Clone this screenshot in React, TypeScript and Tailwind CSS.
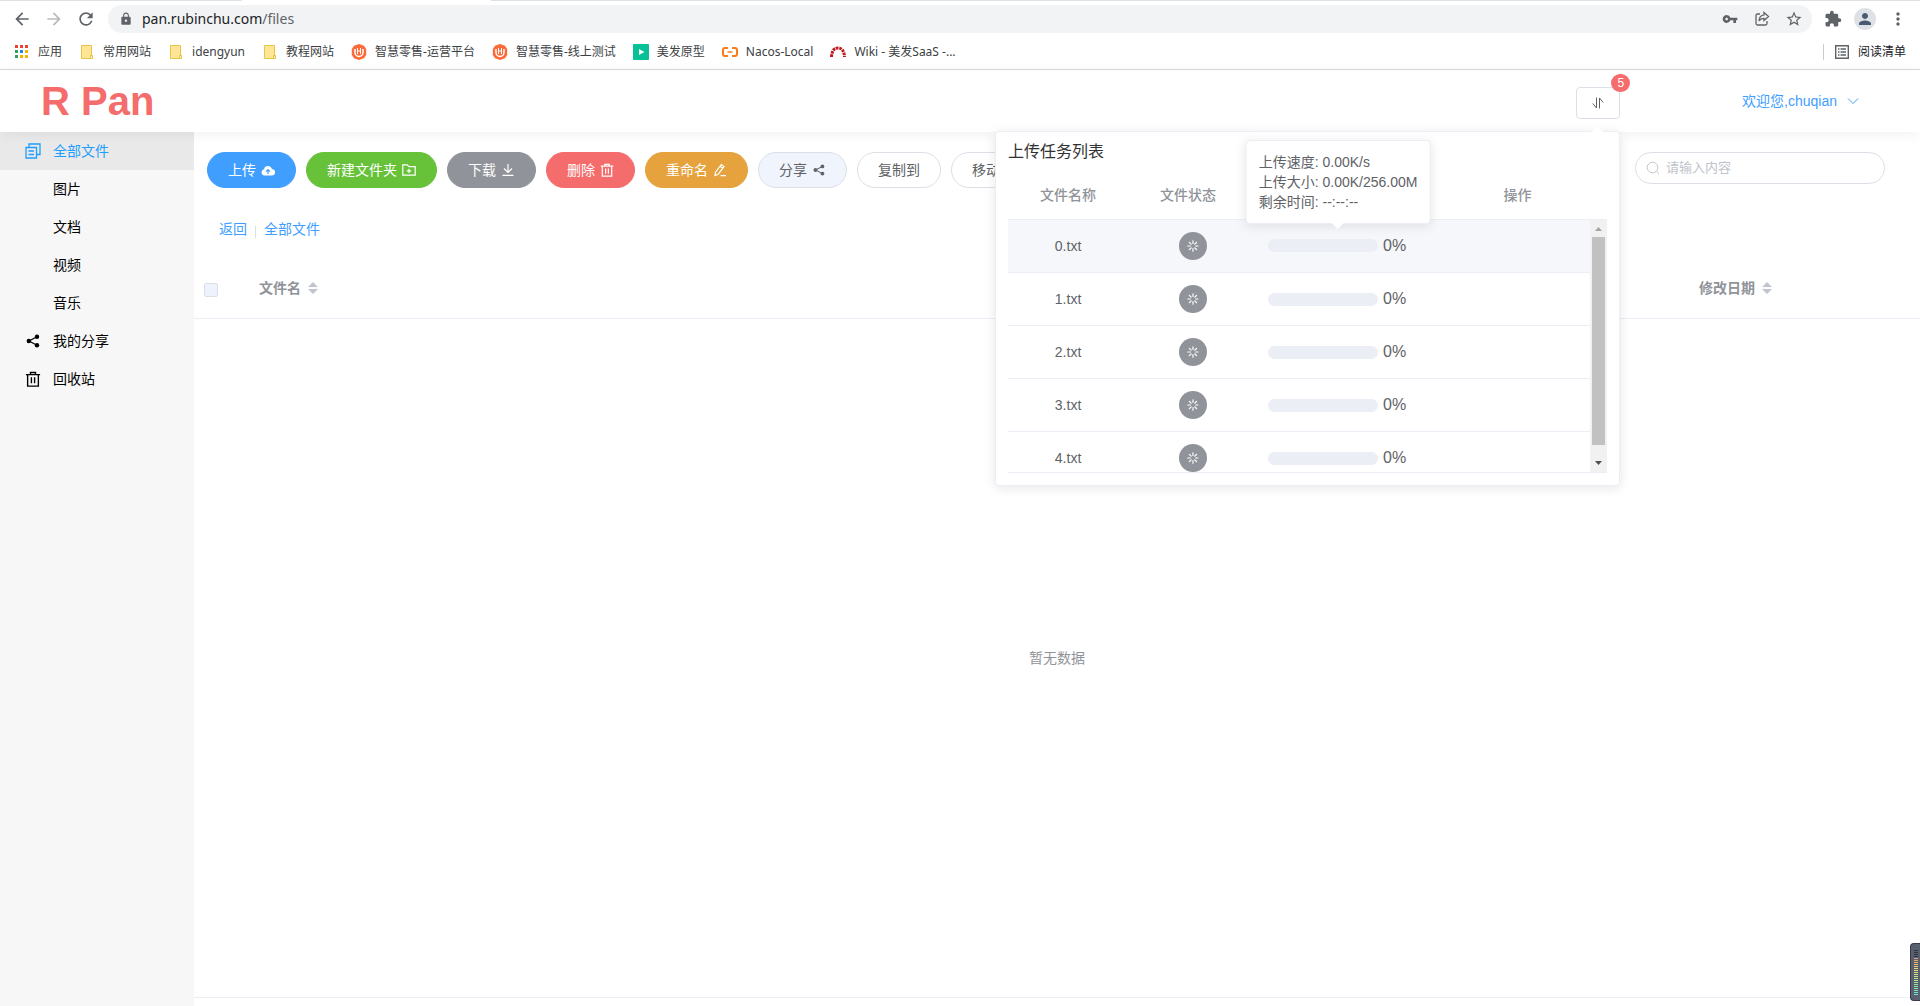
import { ReactNode, useState } from "react";
import {
  MdArrowBack,
  MdArrowForward,
  MdExtension,
  MdLock,
  MdMoreVert,
  MdPerson,
  MdRefresh,
  MdStarBorder,
  MdVpnKey,
} from "react-icons/md";

interface ITask {
  name: string;
  percent: number;
}

interface IMenu {
  label: string;
  icon?: ReactNode;
}

interface IBookmark {
  label: string;
  icon: ReactNode;
}

interface IAction {
  label: string;
  icon?: ReactNode;
  style: string;
}

const tasks: ITask[] = [
  { name: "0.txt", percent: 0 },
  { name: "1.txt", percent: 0 },
  { name: "2.txt", percent: 0 },
  { name: "3.txt", percent: 0 },
  { name: "4.txt", percent: 0 },
];

const AppsIcon = () => (
  <svg className="size-4" viewBox="0 0 16 16">
    <path fill="#ea4335" d="M1 1h3v3H1zM6 1h3v3H6zM11 1h3v3h-3z" />
    <path fill="#34a05a" d="M1 6h3v3H1z" />
    <path fill="#1a87f0" d="M6 6h3v3H6z" />
    <path fill="#f4b400" d="M11 6h3v3h-3zM6 11h3v3H6zM11 11h3v3h-3z" />
    <path fill="#34a05a" d="M1 11h3v3H1z" />
  </svg>
);

const BookmarkFolder = () => (
  <svg className="size-4" viewBox="0 0 16 16">
    <path fill="#ffe694" stroke="#e8c54a" d="M2.5 1.5h10v10h1v3h-11z" />
    <path fill="#fff3c4" stroke="#e8c54a" d="M11.5 11.5h2v3h-2z" />
  </svg>
);

const RetailIcon = () => (
  <svg className="size-4" viewBox="0 0 16 16" fill="none">
    <path fill="#fb6a38" d="M8 0l5 1.8L15.200 5v6L13 14.200 8 16l-5-1.800L.8 11V5L3 1.800z" />
    <path stroke="#fff" strokeWidth="1.500" d="M4 5v3.500a4 4 0 0 0 8 0V5" />
    <path stroke="#fff" d="M6.500 4v6M9.500 4v6M6.500 7h3" />
  </svg>
);

const PrototypeIcon = () => (
  <svg className="size-4" viewBox="0 0 16 16">
    <rect width="16" height="16" rx="1" fill="#06c196" />
    <path fill="#fff" d="M6 5l5.500 3L6 11z" />
  </svg>
);

const NacosIcon = () => (
  <svg className="size-4" viewBox="0 0 16 16" fill="none" stroke="#ff7a14">
    <path
      strokeWidth="2"
      d="M6 4H3Q1 4 1 6v4q0 2 2 2h3M10 4h3q2 0 2 2v4q0 2-2 2h-3"
    />
    <path strokeWidth="1.500" d="M5.500 8h5" />
  </svg>
);

const WikiIcon = () => (
  <svg className="size-4" viewBox="0 0 16 16" fill="none">
    <path
      stroke="#c0161c"
      strokeWidth="3"
      strokeDasharray="2.600 0.800"
      d="M1.500 13Q2 4 8 4t6.500 9"
    />
  </svg>
);

const bookmarks: IBookmark[] = [
  { label: "应用", icon: <AppsIcon /> },
  { label: "常用网站", icon: <BookmarkFolder /> },
  { label: "idengyun", icon: <BookmarkFolder /> },
  { label: "教程网站", icon: <BookmarkFolder /> },
  { label: "智慧零售-运营平台", icon: <RetailIcon /> },
  { label: "智慧零售-线上测试", icon: <RetailIcon /> },
  { label: "美发原型", icon: <PrototypeIcon /> },
  { label: "Nacos-Local", icon: <NacosIcon /> },
  { label: "Wiki - 美发SaaS -...", icon: <WikiIcon /> },
];

const ShareIcon = ({ className }: { className: string }) => (
  <svg className={className} viewBox="0 0 14 14" fill="currentColor">
    <path fill="none" stroke="currentColor" strokeWidth="1.200" d="M11 2.800L3 7l8 4.200" />
    <circle cx="11" cy="2.800" r="2.200" />
    <circle cx="2.800" cy="7" r="2.200" />
    <circle cx="11" cy="11.200" r="2.200" />
  </svg>
);

const TrashIcon = ({ className }: { className: string }) => (
  <svg className={className} viewBox="0 0 14 14" fill="none" stroke="currentColor">
    <path
      strokeWidth="1.200"
      d="M.800 3.200h12.400M4.800 3V1.300h4.400V3M2.300 3.500v9.700h9.400V3.500M5.600 5.500v5.300M8.400 5.500v5.300"
    />
  </svg>
);

const CopyIcon = () => (
  <svg className="size-4" viewBox="0 0 16 16" fill="none" stroke="currentColor">
    <path strokeWidth="1.300" d="M1 4.500h10.500V15H1zM4 4V1h11v10.500h-3M3.500 8h5.500M3.500 11.500h5.500" />
  </svg>
);

const CloudIcon = () => (
  <svg className="size-3.5" viewBox="0 0 14 14">
    <path
      fill="#fff"
      d="M3.500 12.500A3.200 3.200 0 0 1 3 6.200a4.200 4.200 0 0 1 8-.300 3.300 3.300 0 0 1-.5 6.600z"
    />
    <path fill="none" stroke="#409eff" strokeWidth="1.200" d="M7 11V7M5 8.600l2-2 2 2" />
  </svg>
);

const FolderAddIcon = () => (
  <svg className="size-3.5" viewBox="0 0 14 14" fill="none" stroke="currentColor">
    <path strokeWidth="1.200" d="M.800 1.800h4.400L7 3.600h6.200v8.600H.800zM7 5.700v4.400M4.800 7.900h4.400" />
  </svg>
);

const DownloadIcon = () => (
  <svg className="size-3.5" viewBox="0 0 14 14" fill="none" stroke="currentColor">
    <path strokeWidth="1.200" d="M7 1v8.500M3 5.500l4 4 4-4M1.500 12.400h11" />
  </svg>
);

const EditIcon = () => (
  <svg className="size-3.5" viewBox="0 0 14 14" fill="none" stroke="currentColor">
    <path
      strokeWidth="1.200"
      d="M2 12.500l.500-3.300L8.300 1.500l2.700 2-5.800 7.700zM7 3.200l2.700 2M7.500 12.700H13"
    />
  </svg>
);

const LoadingIcon = () => (
  <svg className="size-3" viewBox="0 0 12 12" fill="none" stroke="#fff" strokeLinecap="round">
    <path
      strokeWidth="1.200"
      d="M6 .800v2.600M6 8.600v2.600M.800 6h2.600M8.600 6h2.400M2.300 2.300l1.900 1.900M7.800 7.800l1.700 1.700M2.300 9.700l1.900-1.900M7.800 4.200l1.700-1.700"
    />
  </svg>
);

const SortIcon = () => (
  <svg className="ml-[7px] inline-block h-3 w-2.5 align-[-1px]" viewBox="0 0 10 12" fill="#c0c4cc">
    <path d="M0 5l5-5 5 5zM0 7l5 5 5-5z" />
  </svg>
);

const menus: IMenu[] = [
  { label: "全部文件", icon: <CopyIcon /> },
  { label: "图片" },
  { label: "文档" },
  { label: "视频" },
  { label: "音乐" },
  { label: "我的分享", icon: <ShareIcon className="size-3.5" /> },
  { label: "回收站", icon: <TrashIcon className="size-4" /> },
];

const actions: IAction[] = [
  { label: "上传", icon: <CloudIcon />, style: "border-[#409eff] bg-[#409eff] text-white" },
  { label: "新建文件夹", icon: <FolderAddIcon />, style: "border-[#67c23a] bg-[#67c23a] text-white" },
  { label: "下载", icon: <DownloadIcon />, style: "border-[#909399] bg-[#909399] text-white" },
  { label: "删除", icon: <TrashIcon className="size-3.5" />, style: "border-[#f56c6c] bg-[#f56c6c] text-white" },
  { label: "重命名", icon: <EditIcon />, style: "border-[#e6a23c] bg-[#e6a23c] text-white" },
  { label: "分享", icon: <ShareIcon className="size-3" />, style: "border-[#dcdfe6] bg-[#f0f4fc] text-[#606266]" },
  { label: "复制到", style: "border-[#dcdfe6] bg-white text-[#606266]" },
  { label: "移动到", style: "border-[#dcdfe6] bg-white text-[#606266]" },
];

const meterColors = [
  "bg-[#2f3542]",
  "bg-[#2f3542]",
  "bg-[#2f3542]",
  "bg-[#2f3542]",
  "bg-[#f0a070]",
  "bg-[#f0a868]",
  "bg-[#f0b468]",
  "bg-[#f0c068]",
  "bg-[#f0cc68]",
  "bg-[#f0d470]",
  "bg-[#e8dc70]",
  "bg-[#e0e078]",
  "bg-[#d4e480]",
  "bg-[#c8e484]",
  "bg-[#bce488]",
  "bg-[#b0e490]",
  "bg-[#a4e498]",
  "bg-[#9ce4a0]",
  "bg-[#90e4a8]",
  "bg-[#88e4b0]",
  "bg-[#80e0bc]",
  "bg-[#78e0c4]",
  "bg-[#70e0d0]",
];

const BrowserBar = () => (
  <div className="border-b border-[#d9d9d9] bg-white font-['Noto_Sans','Noto_Sans_CJK_SC',sans-serif] text-[#3c4043]">
    <div className="flex h-px">
      <div className="w-[242px] bg-[#dee1e6]" />
      <div className="w-[249px]" />
      <div className="flex-1 bg-[#dee1e6]" />
    </div>
    <div className="flex items-center pt-1 pr-3 pl-3 text-[#5f6368]">
      <button aria-label="后退" className="mr-3">
        <MdArrowBack className="size-5" />
      </button>
      <button aria-label="前进" className="mr-3 text-[#b8babd]">
        <MdArrowForward className="size-5" />
      </button>
      <button aria-label="刷新" className="mr-3">
        <MdRefresh className="size-5" />
      </button>
      <div className="flex h-7 flex-1 items-center rounded-full bg-[#f1f3f4] pr-2 pl-[11px]">
        <MdLock className="size-3.5" />
        <div className="ml-[9px] flex-1 text-sm">
          <span className="text-[#202124]">pan.rubinchu.com</span>/files
        </div>
        <div className="flex items-center gap-3">
          <button aria-label="密码" className="flex size-5 items-center justify-center">
            <MdVpnKey className="size-4" />
          </button>
          <button aria-label="分享此页" className="flex size-5 items-center justify-center">
            <svg className="size-4" viewBox="0 0 16 16" fill="none" stroke="currentColor">
              <path strokeWidth="1.300" d="M6 3H3.500Q2 3 2 4.500v8Q2 14 3.500 14h8q1.500 0 1.500-1.500V10" />
              <path strokeWidth="1.300" d="M10 1.500L14.500 5.500 10 9.500V7.300Q6.500 7.300 5 10 5.300 4.300 10 3.800z" />
            </svg>
          </button>
          <button aria-label="收藏" className="flex size-5 items-center justify-center">
            <MdStarBorder className="size-[18px]" />
          </button>
        </div>
      </div>
      <div className="ml-3 flex items-center gap-3">
        <button aria-label="扩展程序">
          <MdExtension className="size-[18px]" />
        </button>
        <button
          aria-label="用户"
          className="flex size-[22px] items-center justify-center rounded-full bg-[#dee1e6] text-[#4a5a72]"
        >
          <MdPerson className="size-[18px]" />
        </button>
        <button aria-label="更多">
          <MdMoreVert className="size-5" />
        </button>
      </div>
    </div>
    <div className="flex h-9 items-center gap-[17px] pt-px pr-3.5 pl-3.5 text-xs">
      {bookmarks.map((item) => (
        <a key={item.label} href="#" className="flex items-center gap-2 whitespace-nowrap">
          {item.icon}
          {item.label}
        </a>
      ))}
      <div className="ml-auto flex items-center text-[#202124]">
        <div className="mr-2.5 h-4 w-px bg-[#c8cacd]" />
        <svg className="mr-2 size-4 text-[#5f6368]" viewBox="0 0 16 16" fill="none" stroke="currentColor">
          <path strokeWidth="1.400" d="M1.700 1.700h12.600v12.600H1.700z" />
          <path strokeWidth="1.300" d="M4 5h1.500M6.500 5H12M4 8h1.500M6.500 8H12M4 11h1.500M6.500 11H12" />
        </svg>
        <button>阅读清单</button>
      </div>
    </div>
  </div>
);

const SpeedTip = () => (
  <div className="absolute bottom-9 left-1/2 z-20 -translate-x-1/2 rounded-sm border border-[#ebeef5] bg-white px-3 py-[11px] text-left text-sm leading-5 whitespace-nowrap shadow-[0_2px_12px_rgba(0,0,0,0.1)]">
    <p>上传速度: 0.00K/s</p>
    <p>上传大小: 0.00K/256.00M</p>
    <p>剩余时间: --:--:--</p>
    <div className="absolute top-full left-1/2 size-0 -translate-x-1/2 border-x-[6px] border-t-[6px] border-x-transparent border-t-white" />
  </div>
);

const TaskPopover = () => (
  <div className="absolute top-11 right-0 z-20 w-[625px] rounded-sm border border-[#ebeef5] bg-white p-3 text-[#606266] shadow-[0_2px_12px_rgba(0,0,0,0.1)]">
    <div className="absolute right-4 bottom-full size-0 border-x-[6px] border-b-[6px] border-x-transparent border-b-white" />
    <h2 className="mb-3 text-base leading-4 text-[#303133]">上传任务列表</h2>
    <table className="w-full table-fixed text-sm text-[#909399]">
      <thead>
        <tr className="h-[47px] border-b border-[#ebeef5]">
          <th className="w-[120px] font-medium">文件名称</th>
          <th className="w-[120px] font-medium">文件状态</th>
          <th className="w-[180px]" />
          <th className="font-medium">操作</th>
        </tr>
      </thead>
    </table>
    <div className="relative">
      {/* the tip hangs over the first row, so it lives outside the clipped body */}
      <div className="absolute top-10 left-[240px] w-[180px]">
        <SpeedTip />
      </div>
      <div className="flex h-[253px] overflow-hidden border-b border-[#ebeef5]">
        <div className="flex-1">
          <table className="w-full table-fixed text-center text-sm">
            <tbody>
              {tasks.map((task, index) => (
                <tr
                  key={task.name}
                  className={
                    index === 0
                      ? "h-[53px] border-b border-[#ebeef5] bg-[#f5f7fa]"
                      : "h-[53px] border-b border-[#ebeef5]"
                  }
                >
                  <td className="w-[120px]">{task.name}</td>
                  <td className="w-[120px]">
                    <div className="ml-2.5 flex justify-center">
                      <span className="flex size-7 items-center justify-center rounded-full bg-[#909399]">
                        <LoadingIcon />
                      </span>
                    </div>
                  </td>
                  <td className="w-[180px] pl-5">
                    <div className="flex items-center gap-[5px]">
                      <div className="h-[13px] w-[110px] overflow-hidden rounded-full bg-[#ebeef5]">
                        <div className="h-full bg-[#409eff]" style={{ width: `${task.percent}%` }} />
                      </div>
                      <span className="text-base">{task.percent}%</span>
                    </div>
                  </td>
                  <td />
                </tr>
              ))}
            </tbody>
          </table>
        </div>
        <div className="flex w-[17px] flex-col items-center bg-[#f1f1f1]">
          <svg className="size-[17px]" viewBox="0 0 17 17" fill="#a3a3a3">
            <path d="M5 11l3.500-4 3.500 4z" />
          </svg>
          <div className="w-[13px] flex-1 bg-[#c1c1c1]" />
          <div className="h-2.5" />
          <svg className="size-[17px]" viewBox="0 0 17 17" fill="#505050">
            <path d="M5 6l3.500 4L12 6z" />
          </svg>
        </div>
      </div>
    </div>
  </div>
);

const Header = () => {
  const [open, setOpen] = useState<boolean>(true);

  return (
    <header className="relative z-10 flex h-[62px] items-center bg-white pr-[61px] pl-[41px] shadow-[0_2px_12px_rgba(0,0,0,0.06)]">
      <h1 className="text-[40px] leading-none font-bold text-[#f56c6c]">R Pan</h1>
      <div className="relative mt-1 mr-[122px] ml-auto">
        <button
          aria-label="上传任务"
          onClick={() => setOpen(!open)}
          className="flex h-8 w-11 items-center justify-center rounded-sm border border-[#dcdfe6] bg-white text-[#606266]"
        >
          <svg className="size-3" viewBox="0 0 12 12" fill="none" stroke="currentColor">
            <path d="M4.500 .500v10.500L.800 6.500" />
            <path d="M7.500 11.500V1l3.700 4.500" />
          </svg>
        </button>
        <span className="absolute -top-[13px] -right-2.5 flex h-[18px] min-w-[18px] items-center justify-center rounded-full bg-[#f56c6c] px-1.5 text-xs text-white">
          5
        </span>
        {open && <TaskPopover />}
      </div>
      <button className="flex items-center gap-2.5 text-sm text-[#409eff]">
        欢迎您,chuqian
        <svg className="h-3 w-3" viewBox="0 0 12 12" fill="none" stroke="currentColor">
          <path d="M1 3.500l5 5 5-5" />
        </svg>
      </button>
    </header>
  );
};

const Sidebar = () => (
  <nav className="w-[194px] shrink-0 bg-[#f7f7f7] text-sm text-black">
    {menus.map((menu, index) => (
      <a
        key={menu.label}
        href="#"
        className={
          index === 0
            ? "flex h-[38px] items-center bg-[#e9e9e9] pl-[25px] text-[#1e9fff]"
            : "flex h-[38px] items-center pl-[25px]"
        }
      >
        <span className="mr-3 flex w-4 justify-center">{menu.icon}</span>
        {menu.label}
      </a>
    ))}
  </nav>
);

const FileTable = () => (
  <div className="mt-[19px] mb-2 flex flex-1 flex-col border-b border-[#ebeef5]">
    <table className="w-full table-fixed text-sm text-[#909399]">
      <thead>
        <tr className="h-[60px] border-b border-[#ebeef5] text-left">
          <th className="w-[55px] pt-1 pl-2.5">
            <input
              type="checkbox"
              aria-label="全选"
              disabled
              className="block size-3.5 appearance-none rounded-xs border border-[#dcdfe6] bg-[#edf2fc]"
            />
          </th>
          <th className="pl-2.5 font-bold">
            文件名
            <SortIcon />
          </th>
          <th className="w-[231px] pl-2.5 font-bold">
            修改日期
            <SortIcon />
          </th>
        </tr>
      </thead>
    </table>
    <div className="flex flex-1 items-center justify-center text-sm text-[#909399]">暂无数据</div>
  </div>
);

const App = () => {
  return (
    <div className="flex min-h-screen flex-col bg-white font-['Liberation_Sans','Noto_Sans_CJK_SC',sans-serif]">
      <BrowserBar />
      <Header />
      <div className="flex flex-1">
        <Sidebar />
        <main className="flex min-w-0 flex-1 flex-col pt-5">
          <div className="flex items-start justify-between pr-[35px] pl-[13px]">
            <div className="flex gap-2.5">
              {actions.map((action) => (
                <button
                  key={action.label}
                  className={`flex h-9 items-center rounded-full border px-5 text-sm whitespace-nowrap ${action.style}`}
                >
                  {action.label}
                  {action.icon && (
                    <span className="ml-[5px] flex w-3.5 justify-center">{action.icon}</span>
                  )}
                </button>
              ))}
            </div>
            <label className="flex h-8 w-[250px] items-center rounded-full border border-[#dcdfe6] px-2.5">
              <svg className="size-3.5 text-[#c0c4cc]" viewBox="0 0 14 14" fill="none" stroke="currentColor">
                <circle cx="6.500" cy="6.500" r="5.300" />
                <path d="M10.500 10.500l2.500 2.500" />
              </svg>
              <input
                type="text"
                aria-label="搜索"
                placeholder="请输入内容"
                className="ml-1.5 min-w-0 flex-1 text-[13px] outline-none placeholder:text-[#c0c4cc]"
              />
            </label>
          </div>
          <div className="mt-[31px] flex items-center pl-[25px] text-sm text-[#409eff]">
            <a href="#">返回</a>
            <span className="mx-2 mt-1.5 h-3 w-px bg-[#dcdfe6]" />
            <a href="#">全部文件</a>
          </div>
          <FileTable />
        </main>
      </div>
      <div className="fixed right-0 bottom-[5px] z-30 flex h-[58px] w-2.5 flex-col items-center gap-px rounded-l-sm border border-r-0 border-[#353b48] bg-[#586070] pt-1.5">
        {meterColors.map((color, index) => (
          <div key={index} className={`h-px w-1 shrink-0 ${color}`} />
        ))}
      </div>
    </div>
  );
};

export default App;
